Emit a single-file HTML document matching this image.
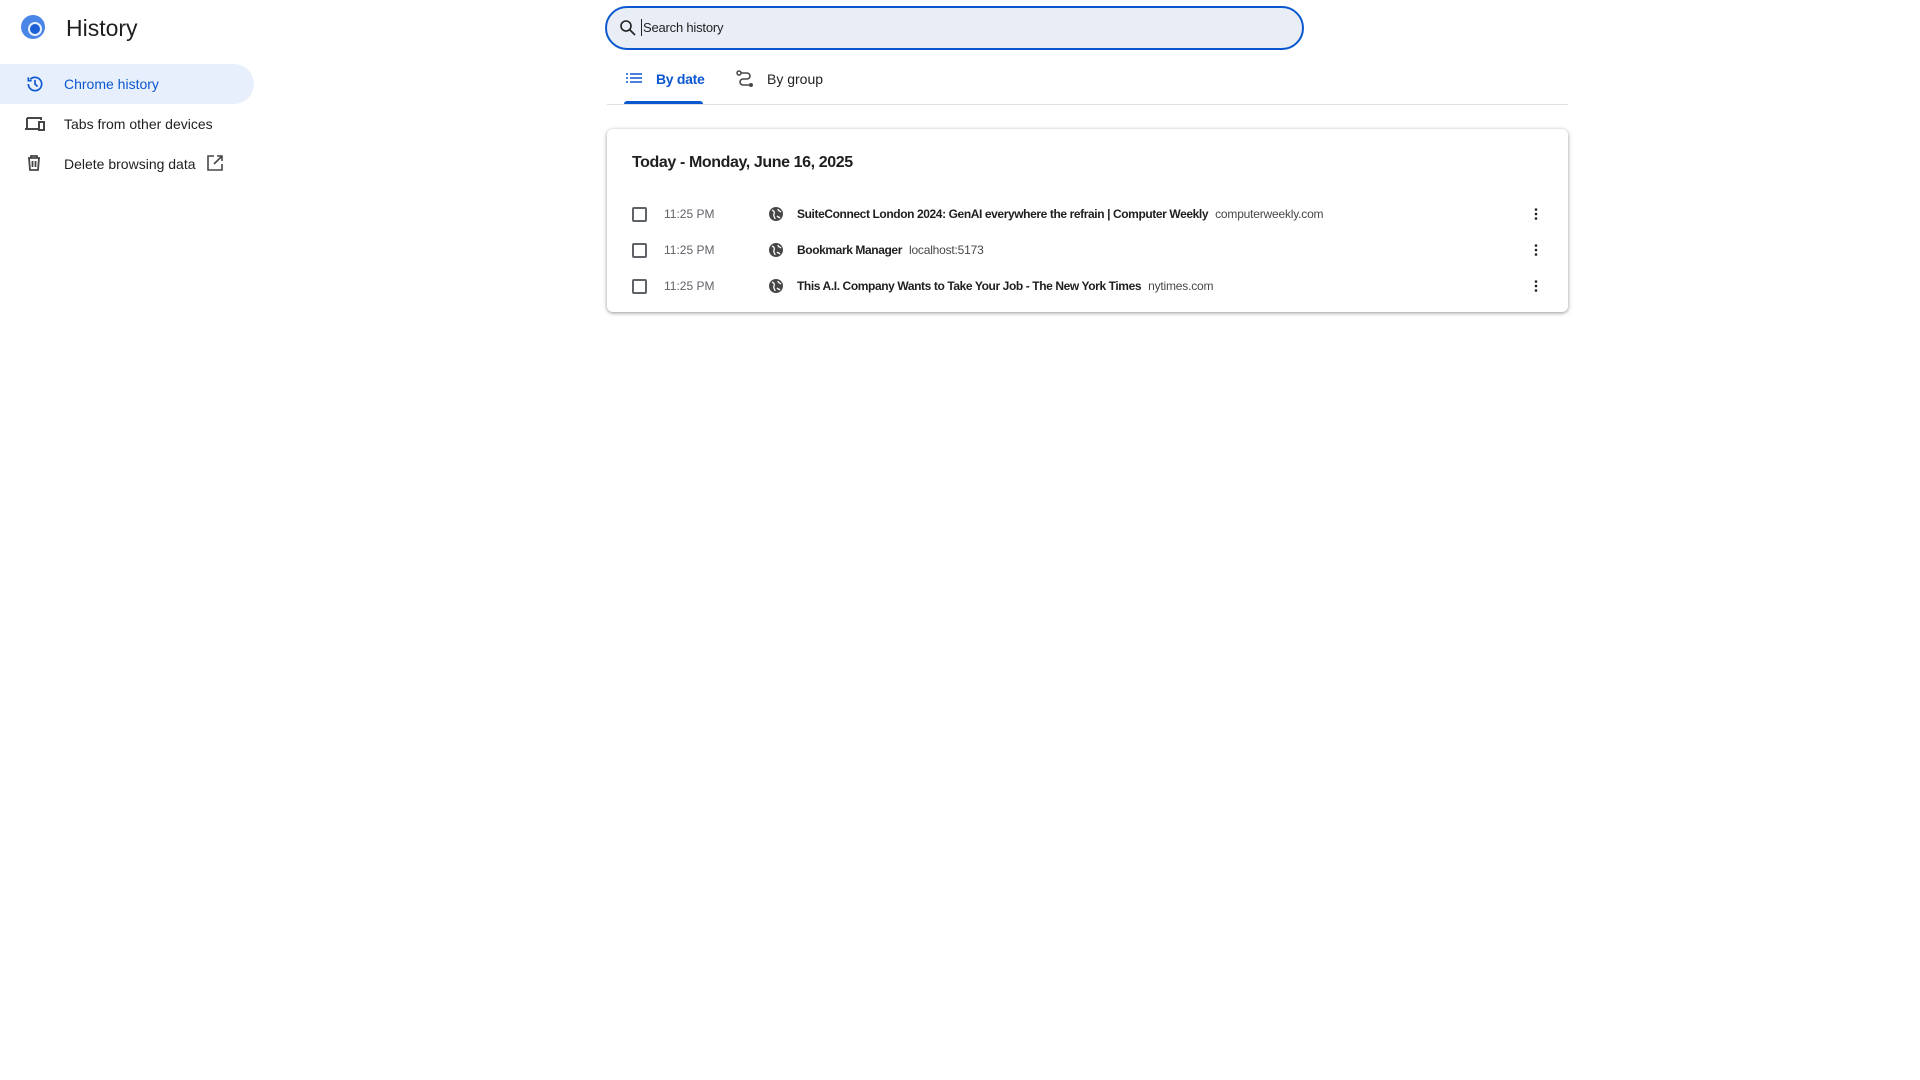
<!DOCTYPE html>
<html><head><meta charset="utf-8"><style>
*{box-sizing:border-box;margin:0;padding:0}
body{width:1920px;height:1080px;background:#fff;font-family:"Liberation Sans",Roboto,sans-serif;color:#1f1f1f;position:relative;overflow:hidden}
.abs{position:absolute}
.logo{left:21px;top:15px;width:24px;height:24px;border-radius:50%;background:#4a86e8}
.logo:after{content:"";position:absolute;left:7px;top:7px;width:10px;height:10px;border-radius:50%;background:#1a5fd6;border:2px solid #e8f0fe}
.title{left:66px;top:14px;font-size:23px;line-height:28px}
.pill{left:0;top:64px;width:254px;height:40px;background:#e8effc;border-radius:0 20px 20px 0}
.nav{font-size:14px;line-height:20px;left:64px}
.search{left:605px;top:6px;width:699px;height:44px;border:2px solid #0b57d0;border-radius:22px;background:#e9eef6}
.tab{font-size:14px;line-height:20px;top:69px}
.card{left:607px;top:129px;width:961px;height:183px;border-radius:6px;box-shadow:0 1px 3px rgba(0,0,0,.3),0 1px 6px rgba(0,0,0,.15);background:#fff}
.row{position:absolute;left:0;width:961px;height:36px;font-size:12px;line-height:36px}
.cb{position:absolute;left:25px;top:11px;width:15px;height:15px;border:2px solid #5f6368;border-radius:2px}
.tm{position:absolute;left:57px;color:#5f6368}
.gl{position:absolute;left:162px;top:11px}
.tt{position:absolute;left:190px;font-weight:bold;color:#1f1f1f;white-space:nowrap;letter-spacing:-0.4px}
.tt span{font-weight:normal;color:#474747;margin-left:7px;letter-spacing:-0.2px}
.dots{position:absolute;left:927px;top:11px}
</style></head><body>
<div class="abs logo"></div>
<div class="abs title">History</div>
<div class="abs pill"></div>
<svg class="abs" style="left:25px;top:74px" width="20" height="20" viewBox="0 0 24 24"><path d="M4 12a8 8 0 1 0 2.3-5.6M4 4v4h4M12 7v5l3 3" fill="none" stroke="#0b57d0" stroke-width="2"/></svg>
<div class="abs nav" style="top:74px;color:#0b57d0">Chrome history</div>
<svg class="abs" style="left:24px;top:114px" width="22" height="20" viewBox="0 0 22 20"><path d="M3 4h14v2M3 4v10M1 15h13" fill="none" stroke="#474747" stroke-width="2"/><rect x="15" y="8" width="5" height="8" fill="none" stroke="#474747" stroke-width="2"/></svg>
<div class="abs nav" style="top:114px">Tabs from other devices</div>
<svg class="abs" style="left:26px;top:154px" width="16" height="18" viewBox="0 0 16 18"><path d="M2 4h12M5 4V2h6v2M3 4l1 12h8l1-12M6.5 7v6M9.5 7v6" fill="none" stroke="#474747" stroke-width="1.8"/></svg>
<div class="abs nav" style="top:154px">Delete browsing data</div>
<svg class="abs" style="left:206px;top:154px" width="18" height="18" viewBox="0 0 18 18"><path d="M8 2H2v14h14v-6M11 2h5v5M16 2L8 10" fill="none" stroke="#474747" stroke-width="1.6"/></svg>
<div class="abs search"></div>
<svg class="abs" style="left:619px;top:19px" width="18" height="18" viewBox="0 0 18 18"><circle cx="7" cy="7" r="5" fill="none" stroke="#1f1f1f" stroke-width="1.6"/><path d="M11 11l5 5" stroke="#1f1f1f" stroke-width="1.6"/></svg>
<div class="abs" style="left:641px;top:19px;width:1px;height:17px;background:#1f1f1f"></div>
<div class="abs" style="left:643px;top:19px;font-size:13px;line-height:17px;color:#1f1f1f;letter-spacing:-0.2px">Search history</div>
<svg class="abs" style="left:626px;top:72px" width="16" height="14" viewBox="0 0 16 14"><path d="M0 2h2M0 6h2M0 10h2M4 2h12M4 6h12M4 10h12" stroke="#0b57d0" stroke-width="1.6"/></svg>
<div class="abs tab" style="left:656px;color:#0b57d0;font-weight:bold;letter-spacing:-0.3px">By date</div>
<svg class="abs" style="left:736px;top:70px" width="18" height="18" viewBox="0 0 18 18"><circle cx="3" cy="3" r="2" fill="none" stroke="#474747" stroke-width="1.5"/><path d="M5 3h6a3 3 0 0 1 0 6H7a3 3 0 0 0 0 6h6" fill="none" stroke="#474747" stroke-width="1.6"/><circle cx="15" cy="15" r="2" fill="#474747"/></svg>
<div class="abs tab" style="left:767px;color:#1f1f1f">By group</div>
<div class="abs" style="left:607px;top:104px;width:961px;height:1px;background:#e3e3e3"></div>
<div class="abs" style="left:624px;top:101px;width:79px;height:3px;background:#0b57d0;border-radius:3px 3px 0 0"></div>
<div class="abs card">
<div class="abs" style="left:25px;top:24px;font-size:16px;line-height:20px;font-weight:bold;color:#1f1f1f;letter-spacing:-0.4px">Today - Monday, June 16, 2025</div>
<div class="row" style="top:67px"><div class="cb"></div><div class="tm">11:25 PM</div><svg class="gl" width="14" height="14" viewBox="0 0 14 14"><circle cx="7" cy="7" r="7" fill="#474747"/><path d="M3 3c2 1 3 2 2 4s1 3 1 5M9 2c0 2 2 2 3 3M8 9c1 1 2 1 3 2" stroke="#fff" stroke-width="1.3" fill="none"/></svg><div class="tt">SuiteConnect London 2024: GenAI everywhere the refrain | Computer Weekly<span>computerweekly.com</span></div><svg class="dots" width="4" height="14"><circle cx="2" cy="2.5" r="1.3" fill="#1f1f1f"/><circle cx="2" cy="7" r="1.3" fill="#1f1f1f"/><circle cx="2" cy="11.5" r="1.3" fill="#1f1f1f"/></svg></div>
<div class="row" style="top:103px"><div class="cb"></div><div class="tm">11:25 PM</div><svg class="gl" width="14" height="14" viewBox="0 0 14 14"><circle cx="7" cy="7" r="7" fill="#474747"/><path d="M3 3c2 1 3 2 2 4s1 3 1 5M9 2c0 2 2 2 3 3M8 9c1 1 2 1 3 2" stroke="#fff" stroke-width="1.3" fill="none"/></svg><div class="tt">Bookmark Manager<span>localhost:5173</span></div><svg class="dots" width="4" height="14"><circle cx="2" cy="2.5" r="1.3" fill="#1f1f1f"/><circle cx="2" cy="7" r="1.3" fill="#1f1f1f"/><circle cx="2" cy="11.5" r="1.3" fill="#1f1f1f"/></svg></div>
<div class="row" style="top:139px"><div class="cb"></div><div class="tm">11:25 PM</div><svg class="gl" width="14" height="14" viewBox="0 0 14 14"><circle cx="7" cy="7" r="7" fill="#474747"/><path d="M3 3c2 1 3 2 2 4s1 3 1 5M9 2c0 2 2 2 3 3M8 9c1 1 2 1 3 2" stroke="#fff" stroke-width="1.3" fill="none"/></svg><div class="tt">This A.I. Company Wants to Take Your Job - The New York Times<span>nytimes.com</span></div><svg class="dots" width="4" height="14"><circle cx="2" cy="2.5" r="1.3" fill="#1f1f1f"/><circle cx="2" cy="7" r="1.3" fill="#1f1f1f"/><circle cx="2" cy="11.5" r="1.3" fill="#1f1f1f"/></svg></div>
</div>
</body></html>
